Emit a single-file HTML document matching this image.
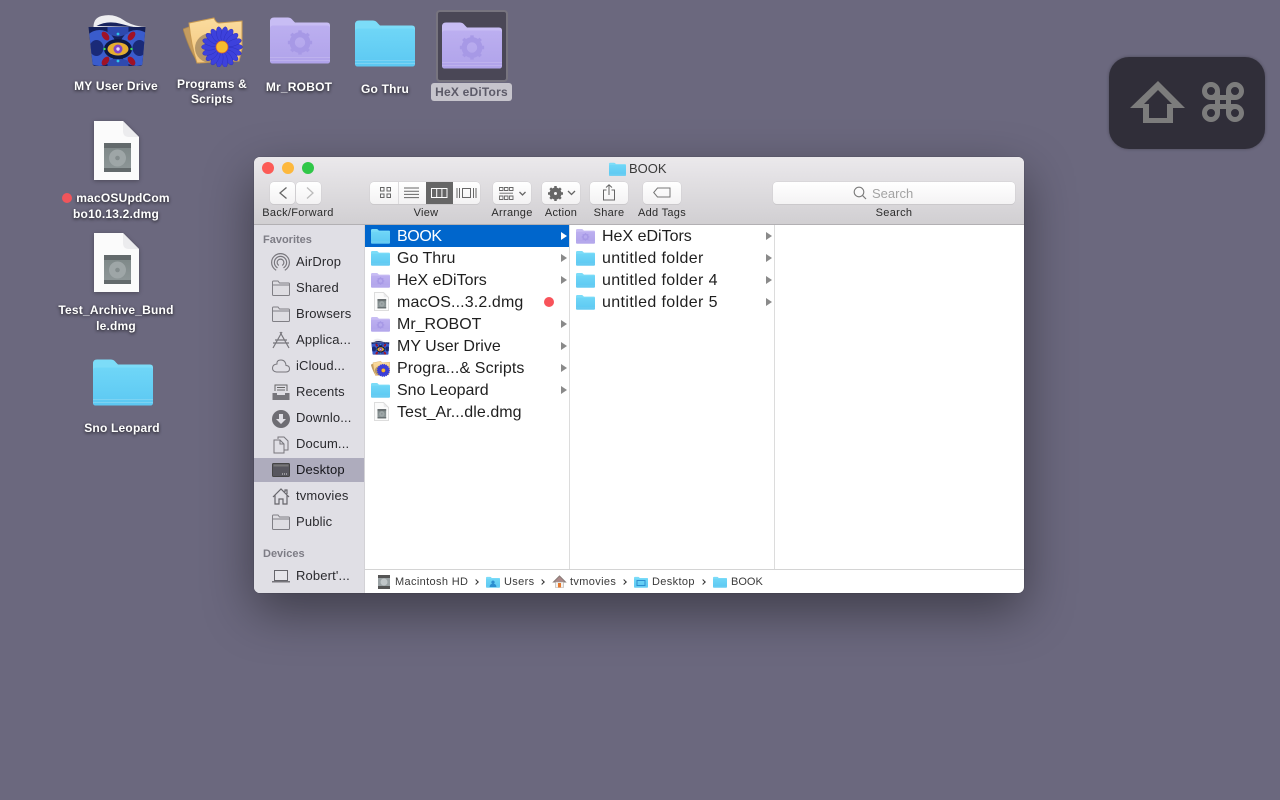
<!DOCTYPE html>
<html><head><meta charset="utf-8"><style>
html,body{margin:0;padding:0;width:1280px;height:800px;overflow:hidden;background:#6b687e}
body{position:relative;font-family:"Liberation Sans",sans-serif;color:#222}
svg{position:absolute;display:block;overflow:visible}
.d{position:absolute;width:140px;text-align:center;font-weight:bold;font-size:12px;letter-spacing:.2px;line-height:15px;color:#fff;text-shadow:0 1px 3px rgba(0,0,0,.8);white-space:nowrap}
#win{position:absolute;left:254px;top:157px;width:770px;height:436px;border-radius:6px;overflow:hidden;background:#fff}
#sh{position:absolute;left:254px;top:157px;width:770px;height:436px;border-radius:6px;box-shadow:0 18px 50px rgba(0,0,0,.42),0 0 1px rgba(0,0,0,.4)}
#tb{position:absolute;left:0;top:0;width:770px;height:67px;background:linear-gradient(#ebe9ec,#d1cfd2);border-bottom:1px solid #b2b0b3}
.dot{position:absolute;top:5px;width:12px;height:12px;border-radius:50%}
.b{position:absolute;top:25px;height:22px;background:linear-gradient(#fff,#f3f2f3);border-radius:4px;box-shadow:0 0 0 .5px #d0ced1,0 1px 0 #c6c4c7}
.tl{position:absolute;top:49px;width:100px;text-align:center;font-size:11px;letter-spacing:.3px;line-height:14px;color:#2b2b2b;white-space:nowrap}
#side{position:absolute;left:0;top:68px;width:110px;height:368px;background:#e0dfe5;border-right:1px solid #d3d2d6}
.sh{position:absolute;left:9px;font-size:11px;font-weight:bold;color:#7d7c85;line-height:14px}
.s{position:absolute;left:42px;font-size:13px;letter-spacing:.15px;line-height:16px;color:#2a2a2e;white-space:nowrap;margin-top:1px}
.c{position:absolute;font-size:16px;line-height:20px;color:#1f1f1f;white-space:nowrap;margin-top:1px}
.a{position:absolute;width:0;height:0;border-left:6px solid #8a8a8a;border-top:4px solid transparent;border-bottom:4px solid transparent}
.p{position:absolute;top:418px;font-size:11px;letter-spacing:.35px;line-height:14px;color:#3a3a3a;white-space:nowrap}
.g{position:absolute;top:423px;width:3px;height:3px;border-top:1.8px solid #333;border-right:1.8px solid #333;transform:rotate(45deg)}
</style></head><body>
<svg width="0" height="0" style="position:absolute">
<defs>
<linearGradient id="bl" x1="0" y1="0" x2="0" y2="1"><stop offset="0" stop-color="#6fd6f7"/><stop offset="1" stop-color="#5cc8f2"/></linearGradient>
<linearGradient id="pu" x1="0" y1="0" x2="0" y2="1"><stop offset="0" stop-color="#bcaff0"/><stop offset="1" stop-color="#b0a3ea"/></linearGradient>
<linearGradient id="tan" x1="0" y1="0" x2="0" y2="1"><stop offset="0" stop-color="#fbdc9e"/><stop offset="1" stop-color="#f3c67e"/></linearGradient>
<linearGradient id="hd" x1="0" y1="0" x2="0" y2="1"><stop offset="0" stop-color="#7c8686"/><stop offset="1" stop-color="#8f9899"/></linearGradient>
<clipPath id="bd"><path d="M1 14H58L55 50Q55 53 52 53H8Q5 53 5 50Z"/></clipPath>
<symbol id="fb" viewBox="0 0 60 48"><path d="M0 6Q0 2 4 2H18Q21 2 23 5L25 7H57Q60 7 60 10V45Q60 48 57 48H3Q0 48 0 45Z" fill="#7cdcf8"/><path d="M0 13Q0 10 3 10H57Q60 10 60 13V45Q60 48 57 48H3Q0 48 0 45Z" fill="url(#bl)"/><path d="M0 42H60M0 45H60" stroke="#86d6f4" stroke-width=".8"/></symbol>
<symbol id="gear" viewBox="0 0 30 30"><circle cx="15" cy="15" r="9" fill="none" stroke="#a799e6" stroke-width="6"/><path d="M15 15V1M15 15V29M15 15H1M15 15H29M15 15L5 5M15 15L25 25M15 15L25 5M15 15L5 25" stroke="#a799e6" stroke-width="4" stroke-dasharray="0 10 6 20" fill="none"/></symbol>
<symbol id="fp" viewBox="0 0 60 48"><path d="M0 6Q0 2 4 2H18Q21 2 23 5L25 7H57Q60 7 60 10V45Q60 48 57 48H3Q0 48 0 45Z" fill="#c8bdf4"/><path d="M0 13Q0 10 3 10H57Q60 10 60 13V45Q60 48 57 48H3Q0 48 0 45Z" fill="url(#pu)"/><path d="M0 42H60M0 45H60" stroke="#c2b7f0" stroke-width=".8"/><use href="#gear" x="17" y="14" width="26" height="26"/></symbol>
<symbol id="dmg" viewBox="0 0 45 59"><path d="M0 0H29L45 16V59H0Z" fill="#fbfbfb"/><path d="M29 0L45 16H35Q29 16 29 10Z" fill="#ececee"/><rect x="10" y="22" width="27" height="29" rx="2" fill="url(#hd)"/><rect x="10" y="22" width="27" height="5" fill="#636a6c"/><rect x="10" y="47" width="27" height="4" fill="#636a6c"/><circle cx="23.500" cy="37" r="8.500" fill="#9ea6a7"/><circle cx="23.500" cy="37" r="2.300" fill="#838c8d"/></symbol>
<symbol id="drive" viewBox="0 0 60 54"><path d="M6 14Q6 5 14 3Q26 0 36 7T59 14Z" fill="#eeeef1"/><path d="M9 13Q20 7 34 11T53 14Z" fill="#18235e"/><path d="M1 14H58L55 50Q55 53 52 53H8Q5 53 5 50Z" fill="#14205a"/><g clip-path="url(#bd)"><ellipse cx="12" cy="35" rx="17" ry="18" fill="#3a5ccc"/><ellipse cx="49" cy="35" rx="17" ry="18" fill="#3a5ccc"/><ellipse cx="9" cy="35" rx="7" ry="8" fill="#1a2a78"/><ellipse cx="52" cy="35" rx="7" ry="8" fill="#1a2a78"/><path d="M20 14H41V20Q30 27 20 20ZM20 53H41V48Q30 43 20 48Z" fill="#2e49ae"/></g><ellipse cx="30.500" cy="36" rx="14" ry="10" fill="#0d1742"/><ellipse cx="30.500" cy="36" rx="10.500" ry="6.500" fill="#e6ae30"/><circle cx="30.500" cy="36" r="4.500" fill="#8245c8"/><circle cx="30.500" cy="36" r="1.700" fill="#e6d8ff"/><ellipse cx="18" cy="23" rx="3" ry="5" fill="#a01226" transform="rotate(-38 18 23)"/><ellipse cx="44" cy="23" rx="3" ry="5" fill="#a01226" transform="rotate(38 44 23)"/><ellipse cx="18" cy="48" rx="3" ry="5" fill="#a01226" transform="rotate(38 18 48)"/><ellipse cx="44" cy="48" rx="3" ry="5" fill="#a01226" transform="rotate(-38 44 48)"/><circle cx="30.500" cy="21" r="1.400" fill="#2ec4e8"/><circle cx="30.500" cy="48" r="1.400" fill="#2ec4e8"/><circle cx="17" cy="36" r="1.200" fill="#3fe05a"/><circle cx="44" cy="36" r="1.200" fill="#3fe05a"/></symbol>
<symbol id="prog" viewBox="0 0 60 52"><path d="M0 14L8 11L16 48Q8 40 0 14Z" fill="#c49c60" stroke="#a98650" stroke-width=".8"/><path d="M6 8L31 3Q33 8 36 8L59 6V34L56 46L14 48Q8 30 6 8Z" fill="url(#tan)" stroke="#c89a52" stroke-width="1"/><ellipse cx="28" cy="33" rx="16" ry="15" fill="#a58a62" opacity=".8"/><g transform="translate(39,32)"><g stroke="#2a2db8" stroke-width=".4" fill="#3d41dc"><ellipse cx="13" rx="7.500" ry="3.200"/><ellipse cx="13" rx="7.500" ry="3.200" transform="rotate(20)"/><ellipse cx="13" rx="7.500" ry="3.200" transform="rotate(40)"/><ellipse cx="13" rx="7.500" ry="3.200" transform="rotate(60)"/><ellipse cx="13" rx="7.500" ry="3.200" transform="rotate(80)"/><ellipse cx="13" rx="7.500" ry="3.200" transform="rotate(100)"/><ellipse cx="13" rx="7.500" ry="3.200" transform="rotate(120)"/><ellipse cx="13" rx="7.500" ry="3.200" transform="rotate(140)"/><ellipse cx="13" rx="7.500" ry="3.200" transform="rotate(160)"/><ellipse cx="13" rx="7.500" ry="3.200" transform="rotate(180)"/><ellipse cx="13" rx="7.500" ry="3.200" transform="rotate(200)"/><ellipse cx="13" rx="7.500" ry="3.200" transform="rotate(220)"/><ellipse cx="13" rx="7.500" ry="3.200" transform="rotate(240)"/><ellipse cx="13" rx="7.500" ry="3.200" transform="rotate(260)"/><ellipse cx="13" rx="7.500" ry="3.200" transform="rotate(280)"/><ellipse cx="13" rx="7.500" ry="3.200" transform="rotate(300)"/><ellipse cx="13" rx="7.500" ry="3.200" transform="rotate(320)"/><ellipse cx="13" rx="7.500" ry="3.200" transform="rotate(340)"/></g><circle r="6" fill="#f7bc2e" stroke="#d9622a" stroke-width=".8"/></g></symbol>
<symbol id="sf" viewBox="0 0 18 16"><path d="M.5 14.500V2Q.5 1 1.500 1H6L7.500 3H16.500Q17.500 3 17.500 4V14.500Q17.500 15.500 16.500 15.500H1.500Q.5 15.500 .5 14.500ZM.5 5H17.500" fill="#dedde2" stroke="#807f85"/></symbol>
</defs></svg>

<svg style="left:87px;top:13px" width="61" height="54"><use href="#drive" width="61" height="54"/></svg>
<div class="d" style="left:46px;top:79px">MY User Drive</div>
<svg style="left:183px;top:15px" width="60" height="52"><use href="#prog" width="60" height="52"/></svg>
<div class="d" style="left:142px;top:77px">Programs &amp;<br>Scripts</div>
<svg style="left:270px;top:15px" width="60" height="49"><use href="#fp" width="60" height="49"/></svg>
<div class="d" style="left:229px;top:80px">Mr_ROBOT</div>
<svg style="left:355px;top:18px" width="60" height="49"><use href="#fb" width="60" height="49"/></svg>
<div class="d" style="left:315px;top:82px">Go Thru</div>
<div style="position:absolute;left:436px;top:10px;width:68px;height:68px;background:#4a4756;border:2px solid #77747f;border-radius:4px"></div>
<svg style="left:442px;top:20px" width="60" height="49"><use href="#fp" width="60" height="49"/></svg>
<div style="position:absolute;left:431px;top:83px;width:81px;height:18px;background:#c6c4cc;border-radius:3px;text-align:center;font-weight:bold;font-size:12px;letter-spacing:.2px;line-height:18px;color:#5c5a68">HeX eDiTors</div>

<svg style="left:94px;top:121px;filter:drop-shadow(0 1px 2px rgba(0,0,0,.3))" width="45" height="59"><use href="#dmg" width="45" height="59"/></svg>
<div style="position:absolute;left:62px;top:193px;width:10px;height:10px;border-radius:50%;background:#f0555b"></div>
<div class="d" style="left:51px;top:191px;padding-left:10px;box-sizing:border-box;width:134px">macOSUpdCom</div>
<div class="d" style="left:46px;top:207px">bo10.13.2.dmg</div>
<svg style="left:94px;top:233px;filter:drop-shadow(0 1px 2px rgba(0,0,0,.3))" width="45" height="59"><use href="#dmg" width="45" height="59"/></svg>
<div class="d" style="left:46px;top:303px">Test_Archive_Bund</div>
<div class="d" style="left:46px;top:319px">le.dmg</div>
<svg style="left:93px;top:357px" width="60" height="49"><use href="#fb" width="60" height="49"/></svg>
<div class="d" style="left:52px;top:421px">Sno Leopard</div>

<div style="position:absolute;left:1109px;top:57px;width:156px;height:92px;border-radius:20px;background:#302e39;box-shadow:0 0 3px rgba(0,0,0,.3)"></div>
<svg style="left:1125px;top:75px" width="66" height="55"><path d="M33 6L60 33H48V48H18V33H5ZM33 15L19 29H24V43H42V29H47Z" fill="#7c7c7c" fill-rule="evenodd"/></svg>
<svg style="left:1202px;top:82px" width="42" height="40" viewBox="0 0 42 40"><g fill="none" stroke="#7c7c7c" stroke-width="5"><circle cx="9" cy="9" r="6.500"/><circle cx="33" cy="9" r="6.500"/><circle cx="9" cy="31" r="6.500"/><circle cx="33" cy="31" r="6.500"/><path d="M15.500 9V31M26.500 9V31M9 15.500H33M9 24.500H33"/></g></svg>

<div id="sh"></div>
<div id="win">
<div id="tb">
<div class="dot" style="left:8px;background:#fc5b57"></div>
<div class="dot" style="left:28px;background:#fdb83d"></div>
<div class="dot" style="left:48px;background:#30c748"></div>
<svg style="left:355px;top:5px" width="17" height="14"><use href="#fb" width="17" height="14"/></svg>
<div style="position:absolute;left:375px;top:4px;font-size:13px;line-height:15px;color:#3a3a3a">BOOK</div>

<div class="b" style="left:16px;width:25px"></div>
<svg style="left:25px;top:30px" width="8" height="12"><path d="M7.500 .5L1 6L7.500 11.500" fill="none" stroke="#666" stroke-width="1.300"/></svg>
<div class="b" style="left:42px;width:25px"></div>
<svg style="left:52px;top:30px" width="8" height="12"><path d="M1 .5L7 6L1 11.500" fill="none" stroke="#bbb" stroke-width="1.300"/></svg>
<div class="tl" style="left:-6px">Back/Forward</div>

<div class="b" style="left:116px;width:110px"></div>
<div style="position:absolute;left:144px;top:25px;width:1px;height:22px;background:#dcdbdd"></div>
<div style="position:absolute;left:172px;top:25px;width:27px;height:22px;background:#666"></div>
<svg style="left:126px;top:30px" width="11" height="11"><g fill="none" stroke="#666"><rect x=".5" y=".5" width="3.500" height="3.500"/><rect x="7" y=".5" width="3.500" height="3.500"/><rect x=".5" y="7" width="3.500" height="3.500"/><rect x="7" y="7" width="3.500" height="3.500"/></g></svg>
<svg style="left:150px;top:30px" width="16" height="12"><path d="M0 1H15M0 4.200H15M0 7.400H15M0 10.600H15" stroke="#666"/></svg>
<svg style="left:177px;top:31px" width="17" height="10"><path d="M.5 .5H16V9.500H.5ZM5.700 .5V9.500M10.900 .5V9.500" fill="none" stroke="#fff"/></svg>
<svg style="left:202px;top:30px" width="22" height="12"><g fill="none" stroke="#666"><rect x="6.500" y="1.500" width="8" height="9"/><path d="M1 1V11M3.500 1V11M17.500 1V11M20 1V11"/></g></svg>
<div class="tl" style="left:122px">View</div>

<div class="b" style="left:239px;width:38px"></div>
<svg style="left:245px;top:30px" width="28" height="13"><g fill="none" stroke="#666" stroke-width=".9"><path d="M.5 .5H4V3.500H.5ZM5.500 .5H9V3.500H5.500ZM10.500 .5H14V3.500H10.500ZM.5 9H4V12.500H.5ZM5.500 9H9V12.500H5.500ZM10.500 9H14V12.500H10.500ZM.5 6.200H14"/><path d="M20.500 5L23.500 8L26.500 5" stroke-width="1.300"/></g></svg>
<div class="tl" style="left:208px">Arrange</div>

<div class="b" style="left:288px;width:38px"></div>
<svg style="left:294px;top:29px" width="15" height="15" viewBox="0 0 30 30"><circle cx="15" cy="15" r="7.500" fill="none" stroke="#666" stroke-width="9"/><path d="M15 15V0M15 15V30M15 15H0M15 15H30M15 15L4.400 4.400M15 15L25.600 25.600M15 15L25.600 4.400M15 15L4.400 25.600" stroke="#666" stroke-width="5" stroke-dasharray="0 9 6 20" fill="none"/></svg>
<svg style="left:313px;top:33px" width="9" height="6"><path d="M1 1L4.500 4.500L8 1" fill="none" stroke="#666" stroke-width="1.300"/></svg>
<div class="tl" style="left:257px">Action</div>

<div class="b" style="left:336px;width:38px"></div>
<svg style="left:349px;top:27px" width="12" height="17"><path d="M3.500 6H.5V16H11.500V6H8.500M6 11V1M3 3.500L6 .8L9 3.500" fill="none" stroke="#666"/></svg>
<div class="tl" style="left:305px">Share</div>

<div class="b" style="left:389px;width:38px"></div>
<svg style="left:399px;top:30px" width="18" height="11"><path d="M4.500 1H17V10H4.500L.7 5.500Z" fill="none" stroke="#777"/></svg>
<div class="tl" style="left:358px">Add Tags</div>

<div class="b" style="left:519px;width:242px;background:linear-gradient(#fff,#f4f3f4)"></div>
<svg style="left:599px;top:29px" width="14" height="14"><circle cx="6" cy="6" r="4.800" fill="none" stroke="#7a7a7a" stroke-width="1.100"/><path d="M9.500 9.500L13 13" stroke="#7a7a7a" stroke-width="1.200"/></svg>
<div style="position:absolute;left:618px;top:29px;font-size:13px;line-height:15px;color:#a3a3a3">Search</div>
<div class="tl" style="left:590px">Search</div>
</div>

<div id="side"></div>
<div style="position:absolute;left:0;top:301px;width:110px;height:24px;background:#aeacbd"></div>
<div class="sh" style="top:76px">Favorites</div>
<svg style="left:17px;top:96px" width="19" height="19" viewBox="0 0 18 18"><g fill="none" stroke="#77767c" stroke-width="1.100"><circle cx="9" cy="9" r="8.400"/><circle cx="9" cy="9" r="5.800"/><circle cx="9" cy="9" r="3.200"/></g><path d="M4 18L9 9L14 18Z" fill="#e0dfe5"/></svg>
<div class="s" style="top:96px">AirDrop</div>
<svg style="left:18px;top:123px" width="18" height="16"><use href="#sf" width="18" height="16"/></svg>
<div class="s" style="top:122px">Shared</div>
<svg style="left:18px;top:149px" width="18" height="16"><use href="#sf" width="18" height="16"/></svg>
<div class="s" style="top:148px">Browsers</div>
<svg style="left:18px;top:174px" width="18" height="18"><path d="M1 17L10 1M17 17L8 1M1 12H17M3 9H15" fill="none" stroke="#77767c" stroke-width="1.200"/></svg>
<div class="s" style="top:174px">Applica...</div>
<svg style="left:18px;top:202px" width="18" height="14"><path d="M4.500 13H14Q17.500 13 17.500 9.800T14 6.500Q13.500 1 9 1T5 5Q.5 5.500 .5 9T4.500 13Z" fill="none" stroke="#77767c"/></svg>
<div class="s" style="top:200px">iCloud...</div>
<svg style="left:18px;top:227px" width="18" height="17"><path d="M3 7V1H15V7M5 3.500H13M5 6H13" fill="none" stroke="#666"/><path d="M.5 9H5V11H13V9H17.500V16H.5Z" fill="#77767c"/></svg>
<div class="s" style="top:226px">Recents</div>
<svg style="left:18px;top:253px" width="18" height="18"><circle cx="9" cy="9" r="9" fill="#6e6d73"/><path d="M7 4H11V9H14L9 14L4 9H7Z" fill="#e0dfe5"/></svg>
<div class="s" style="top:252px">Downlo...</div>
<svg style="left:19px;top:279px" width="16" height="18"><path d="M5 3V1H11L15 5V14H11M1 4H7L11 8V17H1ZM7 4V8H11" fill="#e0dfe5" stroke="#77767c"/></svg>
<div class="s" style="top:278px">Docum...</div>
<svg style="left:18px;top:306px" width="18" height="14"><rect x=".5" y=".5" width="17" height="13" rx="1" fill="#57565e" stroke="#444"/><rect x="1.500" y="1.500" width="15" height="2" fill="#777"/><path d="M10 11H15" stroke="#ddd" stroke-dasharray="1 1"/></svg>
<div class="s" style="top:304px;color:#15151a">Desktop</div>
<svg style="left:18px;top:331px" width="18" height="17"><path d="M1 9L9 1L17 9M3 7V16H7V11H11V16H15V7M13 4V2H15V6" fill="none" stroke="#66656b" stroke-width="1.200"/></svg>
<div class="s" style="top:330px">tvmovies</div>
<svg style="left:18px;top:357px" width="18" height="16"><use href="#sf" width="18" height="16"/></svg>
<div class="s" style="top:356px">Public</div>
<div class="sh" style="top:390px">Devices</div>
<svg style="left:18px;top:413px" width="18" height="13"><path d="M2.500 .5H15.500V10.500H2.500Z" fill="#e6e5ea" stroke="#66656b"/><path d="M0 11H18V12.500H0Z" fill="#77767c"/></svg>
<div class="s" style="top:410px">Robert'...</div>

<div style="position:absolute;left:111px;top:68px;width:204px;height:22px;background:#0066cc"></div>
<div style="position:absolute;left:315px;top:68px;width:1px;height:344px;background:#dcdcdc"></div>
<div style="position:absolute;left:520px;top:68px;width:1px;height:344px;background:#dcdcdc"></div>

<svg style="left:117px;top:71px" width="19" height="16"><use href="#fb" width="19" height="16"/></svg>
<div class="c" style="left:143px;top:69px;color:#fff;letter-spacing:-.4px">BOOK</div><div class="a" style="left:307px;top:75px;border-left-color:#fff"></div>
<svg style="left:117px;top:93px" width="19" height="16"><use href="#fb" width="19" height="16"/></svg>
<div class="c" style="left:143px;top:91px">Go Thru</div><div class="a" style="left:307px;top:97px"></div>
<svg style="left:117px;top:115px" width="19" height="16"><use href="#fp" width="19" height="16"/></svg>
<div class="c" style="left:143px;top:113px">HeX eDiTors</div><div class="a" style="left:307px;top:119px"></div>
<svg style="left:120px;top:135px" width="15" height="19"><use href="#dmg" width="15" height="19"/><path d="M.5 .5H9.500L14.500 5.500V18.500H.5Z" fill="none" stroke="#ddd"/></svg>
<div class="c" style="left:143px;top:135px;letter-spacing:.13px">macOS...3.2.dmg</div><div style="position:absolute;left:290px;top:140px;width:10px;height:10px;border-radius:50%;background:#f8535a"></div>
<svg style="left:117px;top:159px" width="19" height="16"><use href="#fp" width="19" height="16"/></svg>
<div class="c" style="left:143px;top:157px">Mr_ROBOT</div><div class="a" style="left:307px;top:163px"></div>
<svg style="left:117px;top:181px" width="19" height="17"><use href="#drive" width="19" height="17"/></svg>
<div class="c" style="left:143px;top:179px">MY User Drive</div><div class="a" style="left:307px;top:185px"></div>
<svg style="left:117px;top:203px" width="19" height="17"><use href="#prog" width="19" height="17"/></svg>
<div class="c" style="left:143px;top:201px;letter-spacing:.12px">Progra...&amp; Scripts</div><div class="a" style="left:307px;top:207px"></div>
<svg style="left:117px;top:225px" width="19" height="16"><use href="#fb" width="19" height="16"/></svg>
<div class="c" style="left:143px;top:223px">Sno Leopard</div><div class="a" style="left:307px;top:229px"></div>
<svg style="left:120px;top:245px" width="15" height="19"><use href="#dmg" width="15" height="19"/><path d="M.5 .5H9.500L14.500 5.500V18.500H.5Z" fill="none" stroke="#ddd"/></svg>
<div class="c" style="left:143px;top:245px;letter-spacing:.06px">Test_Ar...dle.dmg</div>

<svg style="left:322px;top:71px" width="19" height="16"><use href="#fp" width="19" height="16"/></svg>
<div class="c" style="left:348px;top:69px">HeX eDiTors</div><div class="a" style="left:512px;top:75px"></div>
<svg style="left:322px;top:93px" width="19" height="16"><use href="#fb" width="19" height="16"/></svg>
<div class="c" style="left:348px;top:91px;letter-spacing:.38px">untitled folder</div><div class="a" style="left:512px;top:97px"></div>
<svg style="left:322px;top:115px" width="19" height="16"><use href="#fb" width="19" height="16"/></svg>
<div class="c" style="left:348px;top:113px;letter-spacing:.38px">untitled folder 4</div><div class="a" style="left:512px;top:119px"></div>
<svg style="left:322px;top:137px" width="19" height="16"><use href="#fb" width="19" height="16"/></svg>
<div class="c" style="left:348px;top:135px;letter-spacing:.38px">untitled folder 5</div><div class="a" style="left:512px;top:141px"></div>

<div style="position:absolute;left:111px;top:412px;width:659px;height:1px;background:#d4d4d4"></div>
<svg style="left:123px;top:418px" width="14" height="14"><rect x="1" y="0" width="12" height="14" rx="1" fill="#9aa2a4"/><rect x="1" y="0" width="12" height="3" fill="#555"/><rect x="1" y="11" width="12" height="3" fill="#555"/><circle cx="7" cy="7" r="3.500" fill="#c0c6c8"/></svg>
<div class="p" style="left:141px">Macintosh HD</div><div class="g" style="left:220px"></div>
<svg style="left:232px;top:419px" width="14" height="12"><use href="#fb" width="14" height="12"/><path d="M7 4.500a1.700 1.700 0 1 1-.01 0M3.500 11Q4 7.500 7 7.500T10.500 11Z" fill="#2c8ed0"/></svg>
<div class="p" style="left:250px">Users</div><div class="g" style="left:286px"></div>
<svg style="left:299px;top:418px" width="13" height="13"><path d="M.5 7L6.500 1L12.500 7Z" fill="#a88" stroke="#8a7c78"/><path d="M2.500 7H10.500V12.500H2.500Z" fill="#f4f1ee" stroke="#b0aaa6" stroke-width=".6"/><rect x="5" y="8" width="3" height="4.500" fill="#e67a2e"/></svg>
<div class="p" style="left:316px">tvmovies</div><div class="g" style="left:368px"></div>
<svg style="left:380px;top:419px" width="14" height="12"><use href="#fb" width="14" height="12"/><rect x="3" y="4.500" width="8" height="5" fill="none" stroke="#2c8ed0"/></svg>
<div class="p" style="left:398px">Desktop</div><div class="g" style="left:447px"></div>
<svg style="left:459px;top:419px" width="14" height="12"><use href="#fb" width="14" height="12"/></svg>
<div class="p" style="left:477px;letter-spacing:0">BOOK</div>
</div>
</body></html>
